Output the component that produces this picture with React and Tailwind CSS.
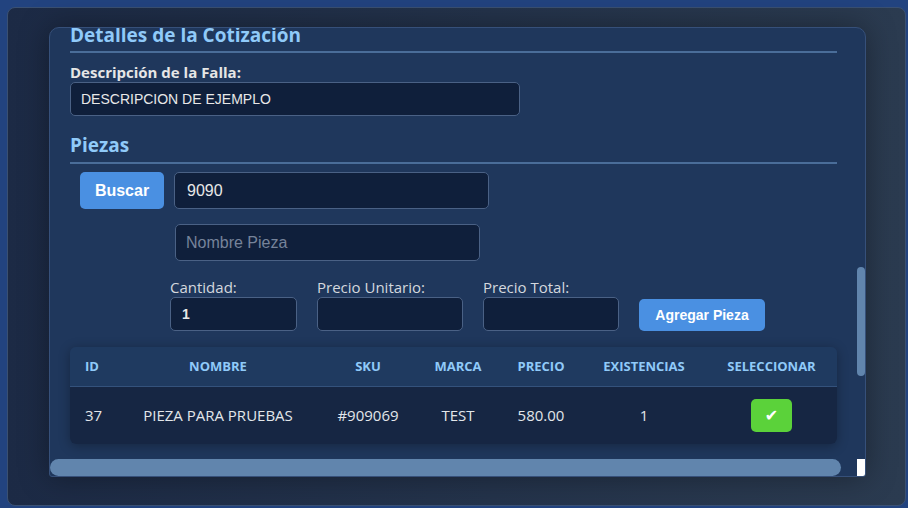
import React from "react";

const cols = "grid-cols-[46px_204px_96px_84px_82px_124px_131px]";

export default function App() {
  return (
    <div className="w-[908px] h-[508px] bg-[#22437f] pl-[7px] pt-[7px] overflow-hidden">
      <div className="w-[899px] h-[499px] rounded-[8px] border border-[#3a5072] bg-gradient-to-r from-[#1c2a45] to-[#2b3b50] pl-[41px] pt-[19px]">
        <div className="w-[817px] h-[450px] rounded-t-[10px] rounded-b-[3px] border border-[#36507a] bg-[#1f375c] shadow-[0_0_30px_rgba(0,0,0,0.35)] flex flex-col overflow-hidden">
          <div className="flex flex-1 min-h-0">
            <div className="flex-1 overflow-hidden px-[20px]" style={{ fontFamily: '"Open Sans", sans-serif' }}>
              <h2 className="text-[19px] leading-[22px] font-bold text-[#90caf9] -mt-[4px] pb-[5px] border-b-2 border-[#4a6d99]">
                Detalles de la Cotización
              </h2>
              <div className="mt-[9px] text-[15px] leading-[20px] font-bold text-[#e6e6e6]">Descripción de la Falla:</div>
              <div className="w-[450px] h-[34px] rounded-[5px] border border-[#4a6185] bg-[#0f1f3b] flex items-center pl-[10px] text-[14px] text-[#e8e8e8]" style={{ fontFamily: '"Liberation Sans", sans-serif' }}>
                DESCRIPCION DE EJEMPLO
              </div>
              <h2 className="mt-[18px] text-[19px] leading-[22px] font-bold text-[#90caf9] pb-[6px] border-b-2 border-[#4a6d99]">
                Piezas
              </h2>
              <div className="mt-[8px] pl-[10px] flex gap-[10px]" style={{ fontFamily: '"Liberation Sans", sans-serif' }}>
                <div className="w-[84px] h-[37px] rounded-[5px] bg-[#4a90e2] flex items-center justify-center text-white font-bold text-[16px]">Buscar</div>
                <div className="w-[315px] h-[37px] rounded-[5px] border border-[#4a6185] bg-[#0f1f3b] flex items-center pl-[12px] text-[16px] text-[#e8e8e8]">9090</div>
              </div>
              <div className="mt-[15px] ml-[105px] w-[305px] h-[37px] rounded-[5px] border border-[#4a6185] bg-[#0f1f3b] flex items-center pl-[10px] text-[16px] text-[#76839a]" style={{ fontFamily: '"Liberation Sans", sans-serif' }}>
                Nombre Pieza
              </div>
              <div className="mt-[16px] ml-[100px] flex items-end gap-[20px]">
                <div className="flex flex-col">
                  <span className="text-[15px] leading-[20px] text-[#d4d8de]">Cantidad:</span>
                  <div className="w-[127px] h-[34px] rounded-[5px] border border-[#4a6185] bg-[#0f1f3b] flex items-center pl-[11px] text-[14px] font-bold text-[#e8e8e8]" style={{ fontFamily: '"Liberation Sans", sans-serif' }}>1</div>
                </div>
                <div className="flex flex-col">
                  <span className="text-[15px] leading-[20px] text-[#d4d8de]">Precio Unitario:</span>
                  <div className="w-[146px] h-[34px] rounded-[5px] border border-[#4a6185] bg-[#0f1f3b]"></div>
                </div>
                <div className="flex flex-col">
                  <span className="text-[15px] leading-[20px] text-[#d4d8de]">Precio Total:</span>
                  <div className="w-[136px] h-[34px] rounded-[5px] border border-[#4a6185] bg-[#0f1f3b]"></div>
                </div>
                <div className="w-[126px] h-[32px] rounded-[5px] bg-[#4a90e2] flex items-center justify-center text-white font-bold text-[14px]" style={{ fontFamily: '"Liberation Sans", sans-serif' }}>
                  Agregar Pieza
                </div>
              </div>
              <div className="mt-[16px] w-[767px] rounded-[6px] overflow-hidden shadow-[0_2px_12px_rgba(0,0,0,0.3)]">
                <div className={`grid ${cols} h-[40px] items-center bg-[#1f3a60] border-b border-[#34527c] text-[13px] font-bold text-[#90caf9]`}>
                  <span className="pl-[15px]">ID</span>
                  <span className="text-center">NOMBRE</span>
                  <span className="text-center">SKU</span>
                  <span className="text-center">MARCA</span>
                  <span className="text-center">PRECIO</span>
                  <span className="text-center">EXISTENCIAS</span>
                  <span className="text-center">SELECCIONAR</span>
                </div>
                <div className={`grid ${cols} h-[57px] items-center bg-[#162643] text-[15px] text-[#e2e6ea]`}>
                  <span className="pl-[15px]">37</span>
                  <span className="text-center">PIEZA PARA PRUEBAS</span>
                  <span className="text-center">#909069</span>
                  <span className="text-center">TEST</span>
                  <span className="text-center">580.00</span>
                  <span className="text-center">1</span>
                  <span className="flex justify-center">
                    <span className="w-[41px] h-[33px] rounded-[5px] bg-[#5bd23a] flex items-center justify-center text-white text-[16px]" style={{ fontFamily: '"DejaVu Sans", sans-serif' }}>✔</span>
                  </span>
                </div>
              </div>
            </div>
            <div className="w-[8px] shrink-0">
              <div className="mt-[239px] h-[109px] w-[8px] rounded-full bg-[#6185ad]"></div>
            </div>
          </div>
          <div className="h-[17px] flex shrink-0">
            <div className="w-[791px] h-[17px] rounded-full bg-[#6185ad]"></div>
            <div className="flex-1"></div>
            <div className="w-[8px] h-[17px] bg-white"></div>
          </div>
        </div>
      </div>
    </div>
  );
}
